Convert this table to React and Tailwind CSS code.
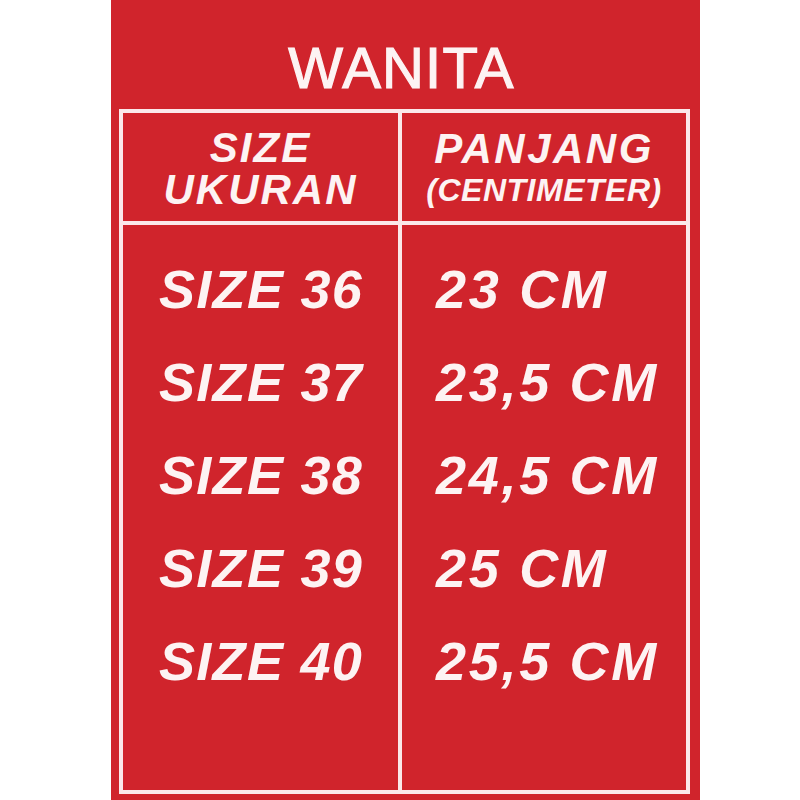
import React from "react";

const rows = [
  ["SIZE 36", "23 CM"],
  ["SIZE 37", "23,5 CM"],
  ["SIZE 38", "24,5 CM"],
  ["SIZE 39", "25 CM"],
  ["SIZE 40", "25,5 CM"],
];

export default function App() {
  return (
    <div className="w-[800px] h-[800px] bg-white flex pl-[111px] font-['Liberation_Sans',Arial,sans-serif]">
      <div className="w-[589px] h-[800px] bg-[#d0242c] flex flex-col pl-[8px] pr-[10px] pb-[6px]">
        <div className="h-[109px] flex items-center justify-center text-[#fdf3f3] text-[58px] leading-none pt-[26px] pr-[6px] tracking-[1.2px] [-webkit-text-stroke:1.2px_#fdf3f3]">
          WANITA
        </div>
        <div className="flex-1 border-4 border-[#fbe8ea] flex flex-col text-[#fdf3f3] font-bold italic">
          <div className="h-[112px] flex border-b-4 border-[#fbe8ea]">
            <div className="w-[275px] flex flex-col items-center justify-center text-[42px] leading-[42px] tracking-[2px] pt-[4px]">
              <span>SIZE</span>
              <span>UKURAN</span>
            </div>
            <div className="w-[4px] bg-[#fbe8ea]" />
            <div className="flex-1 flex flex-col items-center justify-center pt-[4px]">
              <span className="text-[42px] leading-[42px] tracking-[2.5px]">PANJANG</span>
              <span className="text-[32px] leading-[40px] tracking-[0.5px]">(CENTIMETER)</span>
            </div>
          </div>
          <div className="flex-1 flex">
            <div className="w-[275px] flex flex-col pt-[18px] pl-[36px] text-[54px] tracking-[1.3px]">
              {rows.map((r) => (
                <div key={r[0]} className="h-[93px] flex items-center">
                  {r[0]}
                </div>
              ))}
            </div>
            <div className="w-[4px] bg-[#fbe8ea]" />
            <div className="flex-1 flex flex-col pt-[18px] pl-[34px] text-[54px] tracking-[2.7px]">
              {rows.map((r) => (
                <div key={r[1]} className="h-[93px] flex items-center">
                  {r[1]}
                </div>
              ))}
            </div>
          </div>
        </div>
      </div>
    </div>
  );
}
